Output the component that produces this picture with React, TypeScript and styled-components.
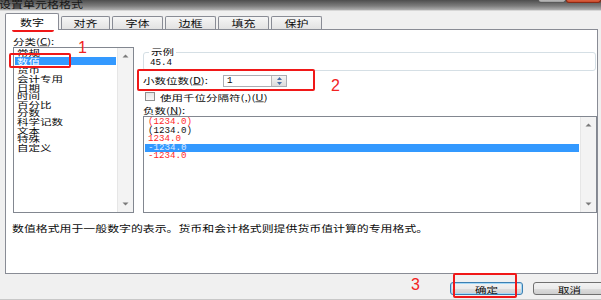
import React from "react";
import styled, { createGlobalStyle, css } from "styled-components";

const Global = createGlobalStyle`
  html, body { margin: 0; padding: 0; background: #f0f0f0; }
  body { width: 601px; height: 300px; overflow: hidden; }
  #root { width: 601px; height: 300px; }
`;

const CJK = `"Noto Sans CJK SC", "Noto Sans", sans-serif`;

const Window = styled.div`
  position: relative;
  width: 601px;
  height: 300px;
  overflow: hidden;
  background: #f0f0f0;
  display: flex;
  flex-direction: column;
  font-family: ${CJK};
  font-size: 11.5px;
  color: #0a0a0a;
`;

const Sq = styled.span<{ $s?: number }>`
  display: inline-block;
  white-space: nowrap;
  line-height: 8px;
  transform: scaleY(${(p) => p.$s ?? 0.74});
  transform-origin: 0 50%;
`;

const TitleBar = styled.div`
  height: 10px;
  flex-shrink: 0;
  display: flex;
  overflow: hidden;
  background: linear-gradient(to bottom, #4e4e4e, #7d7d7d 60%, #b0b0b0);
  border-bottom: 1px solid #d6d6d6;
`;

const TitleText = styled.div`
  margin-top: 0px;
  margin-left: -1px;
  font-size: 12px;
  color: #161616;
  flex: 1;
  display: flex;
  align-items: flex-start;
`;

const CapButton = styled.div<{ $w: number; $red?: boolean }>`
  width: ${(p) => p.$w}px;
  height: 4px;
  margin-top: -1px;
  box-sizing: border-box;
  border: 1px solid ${(p) => (p.$red ? "#8a2a14" : "#5a5a5a")};
  border-top: none;
  border-radius: 0 0 3px 3px;
  background: ${(p) =>
    p.$red ? "linear-gradient(#e4714c, #c8472a)" : "linear-gradient(#cfcfcf, #9a9a9a)"};
`;

const TabStrip = styled.div`
  margin-top: 1px;
  height: 17px;
  flex-shrink: 0;
  display: flex;
  align-items: flex-end;
  gap: 2px;
  padding-left: 5px;
`;

const Tab = styled.div<{ $w: number; $active?: boolean }>`
  width: ${(p) => p.$w}px;
  height: 13px;
  box-sizing: border-box;
  border: 1px solid #898c95;
  border-bottom: none;
  border-radius: 2px 2px 0 0;
  background: linear-gradient(#f6f6f6, #e2e2e2);
  display: flex;
  align-items: center;
  justify-content: center;
  font-size: 12px;
  ${(p) =>
    p.$active &&
    css`
      height: 17px;
      margin-bottom: -1px;
      background: #fff;
      position: relative;
      z-index: 1;
    `}
`;

const Panel = styled.div`
  margin-left: 5px;
  width: 593px;
  height: 245px;
  flex-shrink: 0;
  box-sizing: border-box;
  border: 1px solid #898c95;
  background: #fff;
  padding: 4px 0 0 7px;
  display: flex;
  flex-direction: column;
`;

const MainRow = styled.div`
  display: flex;
  gap: 9px;
`;

const LeftCol = styled.div`
  width: 121px;
  display: flex;
  flex-direction: column;
`;

const RightCol = styled.div`
  width: 454px;
  display: flex;
  flex-direction: column;
`;

const FieldLabel = styled.div<{ $h: number }>`
  height: ${(p) => p.$h}px;
  display: flex;
  align-items: center;
`;

const ListBox = styled.div<{ $h: number }>`
  height: ${(p) => p.$h}px;
  box-sizing: border-box;
  border: 1px solid #828790;
  background: #fff;
  display: flex;
  overflow: hidden;
`;

const ListItems = styled.div`
  flex: 1;
  padding: 0 1px;
  overflow: hidden;
`;

const CatItem = styled.div<{ $sel?: boolean }>`
  height: 8.6px;
  display: flex;
  align-items: center;
  padding-left: 2px;
  ${(p) =>
    p.$sel &&
    css`
      background: #3399ff;
      color: #fff;
    `}
`;

const NumItem = styled.div<{ $sel?: boolean; $red?: boolean }>`
  height: 8.5px;
  line-height: 8.5px;
  padding-left: 3px;
  font-family: "Liberation Mono", "DejaVu Sans Mono", monospace;
  font-size: 9.2px;
  white-space: pre;
  color: ${(p) => (p.$red ? "#ff2a2a" : "#111")};
  ${(p) =>
    p.$sel &&
    css`
      background: #3399ff;
      color: #dfe9ff;
    `}
`;

const ScrollBar = styled.div`
  width: 16px;
  flex-shrink: 0;
  background: #f3f3f3;
  border-left: 1px solid #e6e6e6;
  display: flex;
  flex-direction: column;
  justify-content: space-between;
  align-items: center;
  padding: 6px 0;
  box-sizing: border-box;
`;

const GroupBox = styled.div`
  position: relative;
  margin-top: 18px;
  height: 19px;
  box-sizing: border-box;
  border: 1px solid #d5dfe5;
  border-radius: 3px;
  padding: 6px 0 0 6px;
  font-family: "Liberation Mono", monospace;
  font-size: 9.2px;
  line-height: 8px;
  margin-right: 1px;
`;

const GroupTitle = styled.div`
  position: absolute;
  top: -8px;
  left: 5px;
  padding: 0 2px;
  background: #fff;
  font-family: ${CJK};
  font-size: 11.5px;
  height: 12px;
  display: flex;
  align-items: center;
`;

const DecimalRow = styled.div`
  margin-top: 2px;
  height: 14px;
  display: flex;
  align-items: center;
`;

const DecimalLabel = styled.div`
  width: 80px;
  display: flex;
  align-items: center;
`;

const Spin = styled.div`
  margin-top: 2px;
  width: 64px;
  height: 12px;
  box-sizing: border-box;
  border: 1px solid #abadb3;
  display: flex;
  background: #fff;
`;

const SpinValue = styled.div`
  flex: 1;
  padding-left: 3px;
  font-family: "Liberation Mono", monospace;
  font-size: 9.2px;
  line-height: 10px;
`;

const SpinButtons = styled.div`
  width: 14px;
  display: flex;
  flex-direction: column;
  border-left: 1px solid #b8b8b8;
  background: linear-gradient(#f4f4f4, #dcdcdc);
  align-items: center;
  justify-content: space-around;
`;

const CheckRow = styled.div`
  margin-top: 4px;
  height: 11px;
  display: flex;
  align-items: center;
  gap: 5px;
  padding-left: 2px;
`;

const CheckBox = styled.div`
  width: 10px;
  height: 9px;
  box-sizing: border-box;
  border: 1px solid #8e8f8f;
  background: linear-gradient(#e6e6e6, #f8f8f8);
`;

const NegLabel = styled.div`
  margin-top: 2px;
  height: 12px;
  display: flex;
  align-items: center;
`;

const NumList = styled.div`
  flex: 1;
  padding: 1px 1px 0 1px;
  overflow: hidden;
`;

const Description = styled.div`
  margin-top: 10px;
  margin-left: -1px;
  height: 10px;
  display: flex;
  align-items: center;
  font-size: 11.9px;
`;

const ButtonRow = styled.div`
  flex: 1;
  display: flex;
  align-items: flex-start;
  padding: 8px 0 0 450px;
  gap: 10px;
  border-bottom: 1px solid #c8c8c8;
`;

const Button = styled.div<{ $focus?: boolean }>`
  flex-shrink: 0;
  width: 73px;
  height: 13px;
  box-sizing: border-box;
  border: 1px solid #707070;
  border-radius: 3px;
  background: linear-gradient(#f2f2f2 0%, #ebebeb 50%, #dddddd 51%, #cfcfcf 100%);
  display: flex;
  align-items: center;
  justify-content: center;
  ${(p) =>
    p.$focus &&
    css`
      border-color: #3c7fb1;
      box-shadow: inset 0 0 0 1px #a6d8f6;
    `}
`;

const Mark = styled.div<{ $x: number; $y: number; $w: number; $h: number }>`
  position: absolute;
  left: ${(p) => p.$x}px;
  top: ${(p) => p.$y}px;
  width: ${(p) => p.$w}px;
  height: ${(p) => p.$h}px;
  box-sizing: border-box;
  border: 2px solid #f01818;
  border-radius: 2px;
  pointer-events: none;
`;

const Num = styled.div<{ $x: number; $y: number }>`
  position: absolute;
  left: ${(p) => p.$x}px;
  top: ${(p) => p.$y}px;
  font-family: "Liberation Sans", Arial, sans-serif;
  font-size: 16px;
  line-height: 16px;
  color: #f22222;
`;

const Arrow = ({ up }: { up?: boolean }) => (
  <svg width="7" height="4" viewBox="0 0 7 4">
    <path d={up ? "M0.5 3.5 L3.5 0.5 L6.5 3.5 Z" : "M0.5 0.5 L3.5 3.5 L6.5 0.5 Z"} fill="#7a7a7a" />
  </svg>
);

const tabs = [
  { t: "数字", w: 54 },
  { t: "对齐", w: 49 },
  { t: "字体", w: 51 },
  { t: "边框", w: 51 },
  { t: "填充", w: 51 },
  { t: "保护", w: 51 },
];

const cats = ["常规", "数值", "货币", "会计专用", "日期", "时间", "百分比", "分数", "科学记数", "文本", "特殊", "自定义"];

const negs: { t: string; red?: boolean; sel?: boolean }[] = [
  { t: "(1234.0)", red: true },
  { t: "(1234.0)" },
  { t: "1234.0", red: true },
  { t: "-1234.0", sel: true },
  { t: "-1234.0", red: true },
];

export default function App() {
  return (
    <Window>
      <Global />
      <TitleBar>
        <TitleText>
          <Sq $s={0.8}>设置单元格格式</Sq>
        </TitleText>
        <CapButton $w={28} />
        <CapButton $w={35} $red />
      </TitleBar>
      <TabStrip>
        {tabs.map((tb, i) => (
          <Tab key={tb.t} $w={tb.w} $active={i === 0}>
            <Sq $s={0.75}>{tb.t}</Sq>
          </Tab>
        ))}
      </TabStrip>
      <Panel>
        <MainRow>
          <LeftCol>
            <FieldLabel $h={13}>
              <Sq>
                分类(<u>C</u>):
              </Sq>
            </FieldLabel>
            <ListBox $h={166}>
              <ListItems>
                {cats.map((c, i) => (
                  <CatItem key={c} $sel={i === 1}>
                    <Sq>{c}</Sq>
                  </CatItem>
                ))}
              </ListItems>
              <ScrollBar>
                <Arrow up />
                <Arrow />
              </ScrollBar>
            </ListBox>
          </LeftCol>
          <RightCol>
            <GroupBox>
              <GroupTitle>
                <Sq>示例</Sq>
              </GroupTitle>
              45.4
            </GroupBox>
            <DecimalRow>
              <DecimalLabel>
                <Sq>
                  小数位数(<u>D</u>):
                </Sq>
              </DecimalLabel>
              <Spin>
                <SpinValue>1</SpinValue>
                <SpinButtons>
                  <svg width="5" height="3" viewBox="0 0 5 3">
                    <path d="M0 3 L2.5 0 L5 3 Z" fill="#4a6fa5" />
                  </svg>
                  <svg width="5" height="3" viewBox="0 0 5 3">
                    <path d="M0 0 L2.5 3 L5 0 Z" fill="#4a6fa5" />
                  </svg>
                </SpinButtons>
              </Spin>
            </DecimalRow>
            <CheckRow>
              <CheckBox />
              <Sq>
                使用千位分隔符(,)(<u>U</u>)
              </Sq>
            </CheckRow>
            <NegLabel>
              <Sq>
                负数(<u>N</u>):
              </Sq>
            </NegLabel>
            <ListBox $h={97}>
              <NumList>
                {negs.map((n, i) => (
                  <NumItem key={i} $red={n.red} $sel={n.sel}>
                    {n.t}
                  </NumItem>
                ))}
              </NumList>
              <ScrollBar>
                <Arrow up />
                <Arrow />
              </ScrollBar>
            </ListBox>
          </RightCol>
        </MainRow>
        <Description>
          <Sq>数值格式用于一般数字的表示。货币和会计格式则提供货币值计算的专用格式。</Sq>
        </Description>
      </Panel>
      <ButtonRow>
        <Button $focus>
          <Sq>确定</Sq>
        </Button>
        <Button>
          <Sq>取消</Sq>
        </Button>
      </ButtonRow>

      <Mark $x={12} $y={16} $w={42} $h={16} />
      <Mark $x={9} $y={53} $w={62} $h={15} />
      <Num $x={78} $y={40}>1</Num>
      <Mark $x={137} $y={69} $w={178} $h={22} />
      <Num $x={331} $y={78}>2</Num>
      <Num $x={411} $y={277}>3</Num>
      <Mark $x={453} $y={273} $w={64} $h={25} />
    </Window>
  );
}
